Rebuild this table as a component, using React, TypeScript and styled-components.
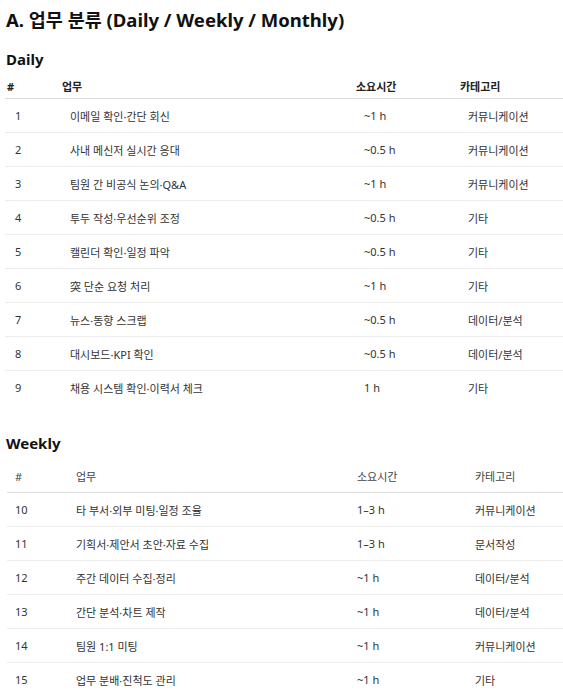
import React from "react";
import styled, { createGlobalStyle } from "styled-components";

const GlobalStyle = createGlobalStyle`
  html, body {
    margin: 0;
    padding: 0;
    background: #ffffff;
  }
  body {
    font-family: "Noto Sans", "Noto Sans CJK KR", sans-serif;
    color: #222;
  }
`;

const Page = styled.div`
  padding: 8px 0 0 6px;
  width: 563px;
  box-sizing: border-box;
`;

const Title = styled.h1`
  margin: 0;
  font-size: 18.5px;
  font-weight: 700;
  line-height: 24px;
  color: #111;
`;

const SectionTitle = styled.h2<{ $gap: number }>`
  margin: ${(p) => p.$gap}px 0 0 0;
  font-size: 15px;
  font-weight: 700;
  line-height: 22px;
  color: #111;
`;

const Table = styled.div<{ $indent: number }>`
  margin-left: ${(p) => p.$indent}px;
  display: flex;
  flex-direction: column;
`;

const HeadRow = styled.div<{ $cols: string; $height: number; $top: number }>`
  display: grid;
  grid-template-columns: ${(p) => p.$cols};
  align-items: center;
  height: ${(p) => p.$height}px;
  margin-top: ${(p) => p.$top}px;
  border-bottom: 1px solid #dcdcdc;
`;

const HeadCell = styled.div<{ $pad: number; $strong: boolean }>`
  padding-left: ${(p) => p.$pad}px;
  font-size: 11px;
  font-weight: ${(p) => (p.$strong ? 700 : 400)};
  color: ${(p) => (p.$strong ? "#222" : "#444")};
  white-space: nowrap;
`;

const Row = styled.div<{ $cols: string; $last: boolean }>`
  display: grid;
  grid-template-columns: ${(p) => p.$cols};
  align-items: center;
  height: 33px;
  border-bottom: 1px solid ${(p) => (p.$last ? "transparent" : "#ececec")};
`;

const Cell = styled.div<{ $pad: number }>`
  padding-left: ${(p) => p.$pad}px;
  font-size: 11px;
  color: #333;
  white-space: nowrap;
`;

type Task = [string, string, string, string];

const daily: Task[] = [
  ["1", "이메일 확인·간단 회신", "~1 h", "커뮤니케이션"],
  ["2", "사내 메신저 실시간 응대", "~0.5 h", "커뮤니케이션"],
  ["3", "팀원 간 비공식 논의·Q&A", "~1 h", "커뮤니케이션"],
  ["4", "투두 작성·우선순위 조정", "~0.5 h", "기타"],
  ["5", "캘린더 확인·일정 파악", "~0.5 h", "기타"],
  ["6", "突 단순 요청 처리", "~1 h", "기타"],
  ["7", "뉴스·동향 스크랩", "~0.5 h", "데이터/분석"],
  ["8", "대시보드·KPI 확인", "~0.5 h", "데이터/분석"],
  ["9", "채용 시스템 확인·이력서 체크", "1 h", "기타"],
];

const weekly: Task[] = [
  ["10", "타 부서·외부 미팅·일정 조율", "1–3 h", "커뮤니케이션"],
  ["11", "기획서·제안서 초안·자료 수집", "1–3 h", "문서작성"],
  ["12", "주간 데이터 수집·정리", "~1 h", "데이터/분석"],
  ["13", "간단 분석·차트 제작", "~1 h", "데이터/분석"],
  ["14", "팀원 1:1 미팅", "~1 h", "커뮤니케이션"],
  ["15", "업무 분배·진척도 관리", "~1 h", "기타"],
];

const headers = ["#", "업무", "소요시간", "카테고리"];

type TableProps = {
  rows: Task[];
  cols: string;
  indent: number;
  headPad: number;
  bodyPad: number;
  headHeight: number;
  headTop: number;
  strong: boolean;
};

function TaskTable({ rows, cols, indent, headPad, bodyPad, headHeight, headTop, strong }: TableProps) {
  return (
    <Table $indent={indent}>
      <HeadRow $cols={cols} $height={headHeight} $top={headTop}>
        {headers.map((h) => (
          <HeadCell key={h} $pad={headPad} $strong={strong}>
            {h}
          </HeadCell>
        ))}
      </HeadRow>
      {rows.map((r, i) => (
        <Row key={r[0]} $cols={cols} $last={i === rows.length - 1}>
          {r.map((c, j) => (
            <Cell key={j} $pad={bodyPad}>
              {c}
            </Cell>
          ))}
        </Row>
      ))}
    </Table>
  );
}

export default function App() {
  return (
    <>
      <GlobalStyle />
      <Page>
        <Title>A. 업무 분류 (Daily / Weekly / Monthly)</Title>
        <SectionTitle $gap={16}>Daily</SectionTitle>
        <TaskTable
          rows={daily}
          cols="55px 294px 104px 1fr"
          indent={-1}
          headPad={2}
          bodyPad={10}
          headHeight={24}
          headTop={4}
          strong
        />
        <SectionTitle $gap={27}>Weekly</SectionTitle>
        <TaskTable
          rows={weekly}
          cols="61px 281px 118px 1fr"
          indent={1}
          headPad={8}
          bodyPad={8}
          headHeight={32}
          headTop={6}
          strong={false}
        />
      </Page>
    </>
  );
}
